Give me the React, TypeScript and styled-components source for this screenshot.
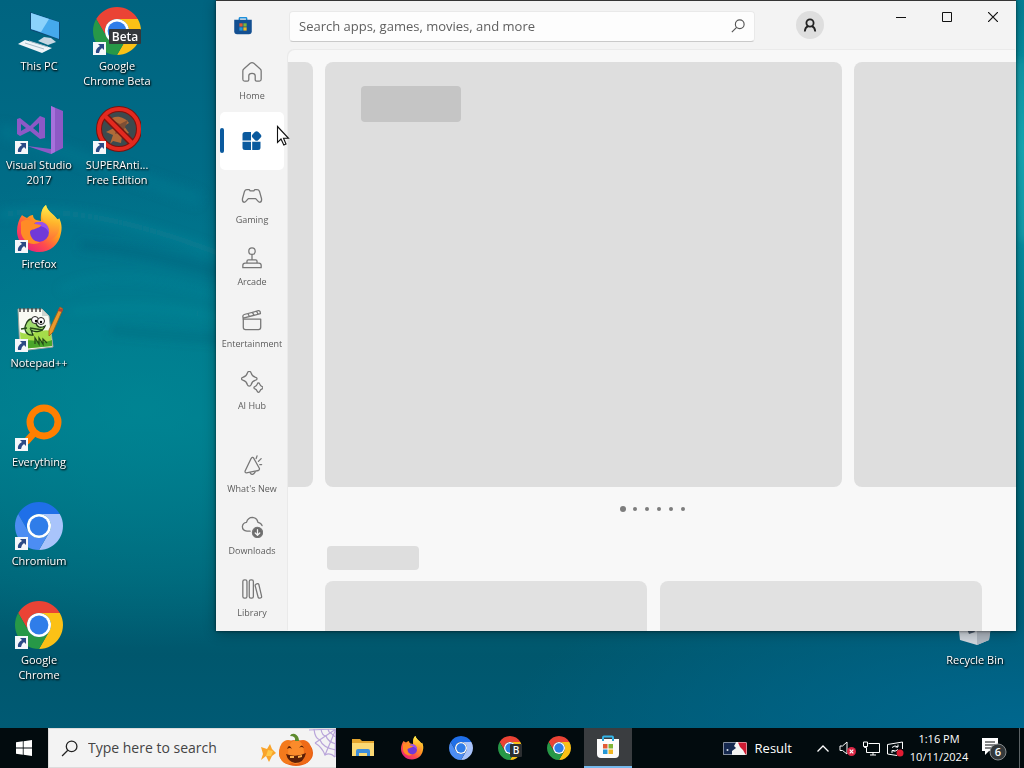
import React from 'react';
import styled, { createGlobalStyle } from 'styled-components';

const GlobalStyle = createGlobalStyle`
  * { box-sizing: border-box; }
  body {
    margin: 0;
    font-family: "Open Sans", "Noto Sans", sans-serif;
    font-size: 12px;
    color: #1b1b1b;
  }
  button { font: inherit; color: inherit; border: 0; padding: 0; background: none; }
  svg { display: block; flex: none; }
`;

/* ---------- Shell ---------- */

const Screen = styled.div`
  display: flex;
  flex-direction: column;
  height: 100vh;
  overflow: hidden;
`;

const Desktop = styled.main`
  position: relative;
  flex: 1;
  min-height: 0;
  overflow: hidden;
  background:
    radial-gradient(ellipse 300px 260px at 100% 20%, #0aa3b0 0%, rgba(10, 163, 176, 0) 100%),
    radial-gradient(ellipse 340px 240px at 14% 56%, rgba(0, 138, 150, 0.65) 0%, rgba(0, 138, 150, 0) 100%),
    radial-gradient(ellipse 520px 180px at 100% 100%, #00678e 0%, rgba(0, 103, 142, 0) 100%),
    linear-gradient(180deg, #006480 0%, #00708a 35%, #00788b 58%, #006478 80%, #00576d 90%, #005a74 100%);
`;

const Waves = styled.svg`
  position: absolute;
  inset: 0;
  width: 100%;
  height: 100%;
`;

const IconGrid = styled.div`
  position: relative;
  display: grid;
  grid-template-columns: 78px 78px 1fr 78px;
  grid-template-rows: repeat(7, 99px);
  padding-right: 10px;
`;

const Shortcut = styled.button<{ $col: number; $row: number }>`
  grid-column: ${(p) => p.$col};
  grid-row: ${(p) => p.$row};
  display: flex;
  flex-direction: column;
  align-items: center;
  gap: 3px;
  padding-top: 7px;
`;

const ShortcutArt = styled.span`
  position: relative;
  width: 48px;
  height: 48px;
`;

const ShortcutArrow = styled.svg`
  position: absolute;
  left: 0;
  bottom: 0;
`;

const ShortcutLabel = styled.span`
  font-size: 11px;
  line-height: 15px;
  color: #fff;
  white-space: pre;
  text-align: center;
  text-shadow: 1px 1px 2px #000, 0 1px 2px rgba(0, 0, 0, 0.7);
`;

/* ---------- Store window ---------- */

const StoreWindow = styled.section`
  position: absolute;
  inset: 0 8px 97px 216px;
  display: flex;
  flex-direction: column;
  overflow: hidden;
  background: #f3f3f3;
  border-top: 1px solid #353535;
  box-shadow: 0 0 3px rgba(0, 0, 0, 0.6), 0 2px 12px rgba(0, 0, 0, 0.3);
`;

const TitleBar = styled.header`
  display: flex;
  align-items: flex-start;
  height: 49px;
  flex: none;
`;

const LogoSlot = styled.div`
  width: 73px;
  padding: 15px 0 0 18px;
`;

const SearchBox = styled.label`
  display: flex;
  align-items: center;
  flex: 1;
  max-width: 466px;
  height: 31px;
  margin-top: 10px;
  padding: 0 9px 1px;
  background: #fdfdfd;
  border: 1px solid #e9e9e9;
  border-bottom-color: #c9c9c9;
  border-radius: 4px;
`;

const SearchInput = styled.input`
  flex: 1;
  min-width: 0;
  padding: 0;
  border: 0;
  outline: 0;
  background: none;
  font: 13px/18px "Open Sans", "Noto Sans", sans-serif;
  &::placeholder { color: #606060; opacity: 1; }
`;

const Avatar = styled.button`
  display: flex;
  align-items: center;
  justify-content: center;
  width: 28px;
  height: 28px;
  margin: 10px 0 0 41px;
  border-radius: 50%;
  background: #dedede;
`;

const Caption = styled.div`
  display: flex;
  margin-left: auto;
`;

const CaptionButton = styled.button`
  display: flex;
  align-items: center;
  justify-content: center;
  width: 46px;
  height: 32px;
`;

const Body = styled.div`
  display: flex;
  flex: 1;
  min-height: 0;
`;

const Sidebar = styled.nav`
  display: flex;
  flex-direction: column;
  justify-content: space-between;
  width: 72px;
  padding: 0 4px 6px;
`;

const NavGroup = styled.div`
  display: flex;
  flex-direction: column;
  gap: 4px;
`;

const NavItem = styled.button<{ $active?: boolean }>`
  position: relative;
  display: flex;
  flex-direction: column;
  align-items: center;
  justify-content: ${(p) => (p.$active ? 'center' : 'flex-start')};
  height: 58px;
  padding-top: ${(p) => (p.$active ? 0 : 11)}px;
  border-radius: 5px;
  background: ${(p) => (p.$active ? '#fff' : 'none')};
  color: ${(p) => (p.$active ? '#0b5a9e' : '#777')};
  &::before {
    content: '';
    display: ${(p) => (p.$active ? 'block' : 'none')};
    position: absolute;
    left: 0;
    top: 16px;
    width: 4px;
    height: 25px;
    border-radius: 2px;
    background: #0b5a9e;
  }
`;

const NavLabel = styled.span`
  margin-top: 6px;
  font-size: 9px;
  line-height: 14px;
  color: #5c5c5c;
  white-space: nowrap;
`;

const Content = styled.div`
  flex: 1;
  min-width: 0;
  overflow: hidden;
  background: #f8f8f8;
  border-top-left-radius: 7px;
  box-shadow: -1px -1px 0 #eaeaea;
`;

const Carousel = styled.div`
  display: grid;
  grid-template-columns: 25px 1fr 162px;
  gap: 12px;
  height: 425px;
  margin-top: 12px;
`;

const Slide = styled.div<{ $edge?: 'left' | 'right' }>`
  padding: ${(p) => (p.$edge ? '0' : '24px 36px')};
  background: #dedede;
  border-radius: ${(p) => (p.$edge === 'left' ? '0 8px 8px 0' : p.$edge === 'right' ? '8px 0 0 8px' : '8px')};
`;

const SlideTitle = styled.div`
  width: 100px;
  height: 36px;
  border-radius: 4px;
  background: #c5c5c5;
`;

const Pager = styled.div`
  display: flex;
  align-items: center;
  justify-content: center;
  gap: 2px;
  height: 44px;
  padding-left: 2px;
`;

const PagerDot = styled.button<{ $current: boolean }>`
  display: flex;
  align-items: center;
  justify-content: center;
  width: 10px;
  height: 10px;
  &::before {
    content: '';
    width: ${(p) => (p.$current ? 6 : 4)}px;
    height: ${(p) => (p.$current ? 6 : 4)}px;
    border-radius: 50%;
    background: #7d7d7d;
  }
`;

const SectionTitle = styled.div`
  width: 92px;
  height: 24px;
  margin: 15px 0 11px 39px;
  border-radius: 4px;
  background: #dedede;
`;

const CardRow = styled.div`
  display: grid;
  grid-template-columns: 1fr 1fr;
  gap: 13px;
  margin: 0 34px 0 37px;
`;

const Card = styled.div`
  height: 180px;
  border-radius: 8px;
  background: #e1e1e1;
`;

const Pointer = styled.svg`
  position: absolute;
  left: 60px;
  top: 124px;
`;

/* ---------- Taskbar ---------- */

const Taskbar = styled.footer`
  display: flex;
  align-items: stretch;
  flex: none;
  height: 40px;
  background: #020b0e;
  color: #fff;
`;

const StartButton = styled.button`
  display: flex;
  align-items: center;
  justify-content: center;
  width: 48px;
`;

const TaskSearch = styled.label`
  display: flex;
  align-items: center;
  width: 288px;
  padding-left: 12px;
  background: #f3f3f3;
  border: 1px solid #dcdcdc;
  border-right: 0;
`;

const TaskSearchInput = styled.input`
  flex: 1;
  min-width: 0;
  margin-left: 10px;
  padding: 0;
  border: 0;
  outline: 0;
  background: none;
  font: 14px/20px "Open Sans", "Noto Sans", sans-serif;
  &::placeholder { color: #444; opacity: 1; }
`;

const TaskApps = styled.div`
  display: flex;
  gap: 1px;
  margin-left: 3px;
`;

const TaskButton = styled.button<{ $active?: boolean }>`
  display: flex;
  align-items: center;
  justify-content: center;
  width: 48px;
  background: ${(p) => (p.$active ? '#3a3d40' : 'none')};
  border-bottom: ${(p) => (p.$active ? '2px solid #76b9ed' : '0')};
`;

const Tray = styled.div`
  display: flex;
  align-items: center;
  margin-left: auto;
`;

const NewsButton = styled.button`
  display: flex;
  align-items: center;
  gap: 8px;
  margin-right: 19px;
  font-size: 13px;
  line-height: 18px;
`;

const TrayButton = styled.button`
  display: flex;
  align-items: center;
  justify-content: center;
  width: 24px;
  height: 40px;
`;

const Clock = styled.button`
  width: 64px;
  font-size: 11px;
  line-height: 18px;
  white-space: nowrap;
  text-align: center;
`;

const Notifications = styled.button`
  display: flex;
  margin: 2px 12px 0 11px;
`;

const ShowDesktop = styled.button`
  width: 5px;
  height: 40px;
  border-left: 1px solid #5b6265;
`;

/* ---------- Drawings ---------- */

const CHROME = ['#ea4335', '#fbc116', '#279847', '#2f7de9'];
const CHROMIUM = ['#1f6fe8', '#a9c4fb', '#4c8df3', '#2f7de9'];

const ChromeMark = ({ size = 48, colors = CHROME }: { size?: number; colors?: string[] }) => (
  <svg width={size} height={size} viewBox="0 0 48 48">
    <path fill={colors[0]} d="M3.22 12A24 24 0 0 1 44.78 12L24 12A12 12 0 0 0 13.61 30Z" />
    <path fill={colors[1]} d="M44.78 12A24 24 0 0 1 24 48L34.39 30A12 12 0 0 0 24 12Z" />
    <path fill={colors[2]} d="M24 48A24 24 0 0 1 3.22 12L13.61 30A12 12 0 0 0 34.39 30Z" />
    <circle cx="24" cy="24" r="12" fill="#fff" />
    <circle cx="24" cy="24" r="9.4" fill={colors[3]} />
  </svg>
);

const ChromeBetaMark = () => (
  <svg width="48" height="48" viewBox="0 0 48 48">
    <path fill="#ea4335" d="M3.22 12A24 24 0 0 1 44.78 12L24 12A12 12 0 0 0 13.61 30Z" />
    <path fill="#fbc116" d="M44.78 12A24 24 0 0 1 24 48L34.39 30A12 12 0 0 0 24 12Z" />
    <path fill="#279847" d="M24 48A24 24 0 0 1 3.22 12L13.61 30A12 12 0 0 0 34.39 30Z" />
    <circle cx="24" cy="24" r="12" fill="#fff" />
    <circle cx="24" cy="24" r="9.4" fill="#2f7de9" />
    <rect x="16" y="22" width="32" height="15" rx="1" fill="#33373a" />
    <text x="32" y="34" textAnchor="middle" fontSize="12" fontWeight="600" fill="#fff" fontFamily="Open Sans, sans-serif">Beta</text>
  </svg>
);

const FirefoxMark = ({ size = 48 }: { size?: number }) => (
  <svg width={size} height={size} viewBox="0 0 48 48">
    <defs>
      <linearGradient id="fxBody" x1="0.85" y1="0.1" x2="0.2" y2="0.95">
        <stop offset="0" stopColor="#ffe03a" />
        <stop offset="0.4" stopColor="#ff9a1f" />
        <stop offset="0.7" stopColor="#ff4a4e" />
        <stop offset="1" stopColor="#e6237c" />
      </linearGradient>
      <linearGradient id="fxFlame" x1="0.6" y1="0" x2="0.5" y2="1">
        <stop offset="0" stopColor="#fff44f" />
        <stop offset="0.5" stopColor="#ffb52c" />
        <stop offset="1" stopColor="#ff7139" />
      </linearGradient>
    </defs>
    <path fill="url(#fxBody)" d="M7 10C8 11 10 12 12 13C14 11 16 10 18 10C18 12 19 14 21 15L26 16C25 8 28 2 31 0C32 6 38 9 42 14C43 15 44 14 44 13C47 18 47 24 46 28C44 40 35 47 24 47C11 47 2 37 2 26C2 20 4 14 7 10Z" />
    <circle cx="24" cy="27" r="10" fill="#7139d8" />
    <path fill="#9a52ec" d="M20 18C28 14 35 20 34 28C32 23 27 20 20 22Z" />
    <path fill="#ff8b26" d="M6 17C12 13 18 16 20 19L26 20C26 22 22 23 20 24C18 25 16 24 15 27C15 32 19 37 25 37C18 42 8 37 6 28Z" />
    <path fill="url(#fxFlame)" d="M31 0C25 4 26 12 29 16C35 20 37 28 33 35C42 34 47 25 44 13C44 15 43 15 42 14C39 9 32 6 31 0Z" />
  </svg>
);

const ThisPcMark = () => (
  <svg width="48" height="48" viewBox="0 0 48 48">
    <path d="M15 5L45 15V33L15 23Z" fill="#0c4a75" />
    <path d="M16 6L44 15V32L16 22Z" fill="#45a9ec" />
    <path d="M16 6L34 12L26 25L16 22Z" fill="#8bd2fb" />
    <path d="M29 30L36 31L41 35L33 38L23 34Z" fill="#c6d7e2" />
    <path d="M10 33L37 41L27 46L3 37Z" fill="#eef4f8" />
    <path d="M10 36L29 42M14 34L33 40" stroke="#a9bdc9" strokeWidth="1" />
  </svg>
);

const VisualStudioMark = () => (
  <svg width="48" height="48" viewBox="0 0 48 48">
    <path fill="#8d59c6" d="M36 0L48 5V42L36 48L12 40L36 43Z" />
    <path fill="#a571dc" d="M36 0L40 2V46L36 48Z" />
    <path fill="#8d59c6" fillRule="evenodd" d="M2 13L5 12L15 20L25 10L30 12V32L25 33L15 25L5 30L2 28ZM6 18V25L11 22ZM24 17L18 22L24 27Z" />
  </svg>
);

const AntiSpywareMark = () => (
  <svg width="48" height="48" viewBox="0 0 48 48">
    <circle cx="26" cy="23" r="20" fill="#3c4a4e" />
    <path d="M15 16C20 8 31 10 36 17L31 20L36 27L29 30L28 37L20 35L17 38L20 29L13 26L21 22Z" fill="#b06a38" />
    <path d="M17 13L27 18L35 14L30 26L22 28L24 20Z" fill="#7d4f35" />
    <circle cx="26" cy="23" r="20" fill="none" stroke="#7a120e" strokeWidth="6" />
    <path d="M12 10L40 38" stroke="#7a120e" strokeWidth="7" />
    <circle cx="26" cy="23" r="20" fill="none" stroke="#e3291f" strokeWidth="4" />
    <path d="M12 10L40 38" stroke="#e3291f" strokeWidth="4" />
  </svg>
);

const NotepadMark = () => (
  <svg width="48" height="48" viewBox="0 0 48 48">
    <path d="M3 5H27L34 12L38 43L5 47Z" fill="#f8faf3" stroke="#9aa39c" strokeWidth="1" />
    <path d="M27 5V12H34Z" fill="#cdd6d0" />
    <path d="M5 28C15 33 25 24 36 27L37 42L6 45Z" fill="#a5dc4a" />
    <path d="M6 38C16 33 27 41 37 36V42L6 45Z" fill="#4aa52a" />
    <path d="M5 4V8M9 4V8M13 4V8M17 4V8M21 4V8M25 4V8" stroke="#444" strokeWidth="1.5" />
    <path d="M11 20C14 13 20 14 21 19C22 24 26 24 30 22C28 28 20 29 16 26L18 31C12 32 8 26 11 20Z" fill="#9fdc6c" stroke="#1f3d17" strokeWidth="1.3" />
    <circle cx="20" cy="16" r="3.500" fill="#fff" stroke="#222" />
    <circle cx="26" cy="17" r="3.500" fill="#fff" stroke="#222" />
    <circle cx="21" cy="17" r="1.2" />
    <circle cx="26" cy="18" r="1.2" />
    <path d="M6 25L12 24M15 24L28 26M20 40V34L24 40V34L28 40V35L32 39" stroke="#244b18" strokeWidth="1.3" fill="none" />
    <path d="M45 3L48 5L38 28L34 32V26Z" fill="#e9992c" stroke="#94601b" strokeWidth="0.8" />
    <path d="M44 4L48 5L47 8L43 7Z" fill="#b04436" />
  </svg>
);

const EverythingMark = () => (
  <svg width="48" height="48" viewBox="0 0 48 48">
    <circle cx="29" cy="19" r="14" fill="none" stroke="#ff7f00" strokeWidth="7" />
    <path d="M20 29L11 39" stroke="#ff7f00" strokeWidth="7" />
  </svg>
);

const RecycleBinMark = () => (
  <svg width="48" height="48" viewBox="0 0 48 48">
    <path d="M5 4L24 0L43 4L38 39L26 44L9 39Z" fill="#cfd5dc" />
    <path d="M26 8L43 4L38 39L26 44Z" fill="#aeb6c0" />
    <path d="M16 28L22 27L24 31L18 33Z" fill="#4d5d70" />
  </svg>
);

const ExplorerMark = () => (
  <svg width="22" height="20" viewBox="0 0 22 20">
    <path d="M0 1H8L10 3H22V18H0Z" fill="#e3a52f" />
    <path d="M0 5H22V18H0Z" fill="#fbd974" />
    <path d="M4 18V13Q4 11 6 11H16Q18 11 18 13V18H15V15H7V18Z" fill="#3e8edb" />
    <rect x="7" y="15" width="8" height="2" fill="#fbd974" />
  </svg>
);

const StoreMark = ({ dark }: { dark?: boolean }) => (
  <svg width={dark ? 18 : 24} height={dark ? 19 : 26} viewBox="0 0 24 26">
    <path d="M7 7V3.5Q7 2.5 8 2.5H16Q17 2.5 17 3.5V7" fill="none" stroke={dark ? '#1d8fdb' : '#35b5e8'} strokeWidth="2" />
    <path d={dark ? 'M0 5H24V21Q24 25 20 25H4Q0 25 0 21Z' : 'M1 5H23V20Q23 24 19 24H5Q1 24 1 20Z'} fill={dark ? '#134f91' : '#fbfbfb'} />
    {!dark && <path d="M7 5V7M17 5V7" stroke="#2b9fd0" strokeWidth="2" />}
    <path d="M7 10H11.5V14.5H7Z" fill="#e25a35" />
    <path d="M12.5 10H17V14.5H12.5Z" fill="#7fb536" />
    <path d="M7 15.5H11.5V20H7Z" fill="#2497d6" />
    <path d="M12.5 15.5H17V20H12.5Z" fill="#f2b622" />
  </svg>
);

const PumpkinArt = () => (
  <svg width="76" height="38" viewBox="0 0 76 38">
    <g fill="none" stroke="#b9a5da" strokeWidth="1.2">
      <path d="M76 0L49 1M76 0L55 14M76 0L65 26M76 0L75 28" />
      <path d="M68 0Q69 4 71 4Q73 7 76 8M61 0Q62 7 66 7Q68 13 76 15M54 0Q55 10 60 11Q63 19 76 21M55 14Q62 18 65 26Q70 23 75 28" />
    </g>
    <path d="M1 18L7 20L10 15L12 20L16 24L12 27L9 33L6 27L1 31L3 25Z" fill="#f9a42b" />
    <path d="M8 21L13 22L11 27L6 27Z" fill="#ffc94a" />
    <ellipse cx="36" cy="24" rx="17" ry="13" fill="#e55f12" />
    <ellipse cx="28" cy="23" rx="9" ry="12" fill="#f47a1c" />
    <ellipse cx="43" cy="23" rx="9" ry="12" fill="#ef6a17" />
    <ellipse cx="36" cy="23" rx="8" ry="12" fill="#fb8b2b" />
    <path d="M35 12Q36 7 30 7Q31 4 35 5Q39 7 39 12Z" fill="#5e8a2e" />
    <path d="M27 20Q29 14 32 20Q30 18 27 20ZM39 19Q42 14 44 19Q41 17 39 19Z" fill="#5b1f07" />
    <path d="M26 25Q36 29 46 24Q44 34 35 34Q28 33 26 25Z" fill="#5b1f07" />
    <path d="M30 27H34V29H30ZM38 27L42 26V28L38 29Z" fill="#ffb14a" />
  </svg>
);

const Magnifier = ({ size, color, width }: { size: number; color: string; width: number }) => (
  <svg width={size} height={size} viewBox="0 0 16 16" fill="none" stroke={color} strokeWidth={width}>
    <circle cx="10" cy="6" r="5" />
    <path d="M6.4 9.6L1 15" />
  </svg>
);

const glyphs: Record<string, React.ReactNode> = {
  home: <path d="M2 11Q2 9.600 3 8.800L10 2.500Q12 1 14 2.500L21 8.800Q22 9.600 22 11V20Q22 22 20 22H17Q15.500 22 15.500 20.500V16Q15.500 13.500 12 13.500T8.500 16V20.500Q8.500 22 7 22H4Q2 22 2 20Z" />,
  gaming: <path d="M6.500 5H9L10 6.500H14L15 5H17.500Q19.500 5 20.200 7L22.400 15Q22.800 18.500 20.500 18.800Q19.500 18.800 18.500 17.600L16 14.800H8L5.500 17.600Q4.500 18.800 3.500 18.800Q1.200 18.500 1.600 15L3.800 7Q4.500 5 6.500 5Z" />,
  arcade: (
    <>
      <circle cx="12" cy="4.500" r="3.500" />
      <path d="M12 8V14M6.500 17.500V15.500Q6.500 14 8 14H16Q17.500 14 17.500 15.500V17.500M2 22.500V20Q2 17.500 4.500 17.500H19.500Q22 17.500 22 20V22.500Z" />
    </>
  ),
  movies: (
    <>
      <path d="M2.500 11H21.500V20Q21.500 22.500 19 22.500H5Q2.500 22.500 2.500 20Z" />
      <path d="M2.500 11L2 8Q2 6.500 3.500 6L19 1.800Q20.500 1.600 20.900 3L21.200 5L2.500 10M7.500 5L9 8M12.500 3.700L14 6.700M17 2.500L18.500 5.500" />
    </>
  ),
  ai: (
    <>
      <path d="M9 0.500Q10.500 0.500 11 2Q12 6 16 7Q17.500 7.500 17.500 8.500T16 10Q12 11 11 15Q10.500 16.500 9 16.500T7 15Q6 11 2 10Q0.500 9.500 0.500 8.500T2 7Q6 6 7 2Q7.500 0.500 9 0.500Z" />
      <path d="M19 13Q20 13 20.300 14Q21 16.500 23.500 17.200Q24.500 18.500 23.500 19.200Q21 20 20.300 22.500Q19 24 17.900 22.500Q17.200 20 14.700 19.200Q13.500 18.500 14.700 17.200Q17.200 16.500 17.900 14Q18 13 19 13Z" />
    </>
  ),
  news: (
    <>
      <path d="M13.500 4L20 15.500Q20.500 17.500 19 18L6 20.500Q4 20.500 4.500 18.500L11 5Q12.500 3 13.500 4Z" />
      <path d="M10 20.500Q12.500 24.500 15.500 19.500M16.500 5L17.500 2M19 8L22 5M20.500 11.500H22.500" />
    </>
  ),
  downloads: (
    <>
      <path d="M10 16.500H6.500Q1.500 16 1.500 11.500Q2 7.500 6 7Q7.500 1.500 12.500 1.500Q17.500 2 18.500 7Q22 7.500 23 10.500" />
      <circle cx="18" cy="18" r="5.500" fill="#6a6a6a" />
      <path d="M18 15V20.500M15.500 18.500L18 21L20.500 18.500" stroke="#f3f3f3" />
    </>
  ),
  library: (
    <>
      <rect x="2" y="2" width="4.500" height="20" rx="1.800" />
      <rect x="9" y="2" width="4.500" height="20" rx="1.800" />
      <path d="M15.500 8.500Q15.200 7 16.500 6.600L18 6.200Q19 6 19.500 7.200L22.500 20Q22.800 21.300 21.500 21.700L20.300 22Q19 22.200 18.700 21Z" />
    </>
  ),
};

const NavGlyph = ({ name }: { name: string }) => (
  <svg width="22" height="22" viewBox="0 0 24 24" fill="none" stroke="currentColor" strokeWidth="1.400" strokeLinejoin="round" strokeLinecap="round">
    {glyphs[name]}
  </svg>
);

const AppsGlyph = () => (
  <svg width="20" height="20" viewBox="0 0 20 20" fill="currentColor">
    <path d="M3 1H9V9.500H0.500V3.500Q0.500 1 3 1ZM0.500 10.700H9V19H3Q0.500 19 0.500 16.500ZM10.200 10.700H18.500V16.500Q18.500 19 16 19H10.200Z" />
    <rect x="10.600" y="1" width="8" height="8" rx="2.500" transform="rotate(45 14.600 5)" />
  </svg>
);

/* ---------- Data ---------- */

const shortcuts: { label: string; art: React.ReactNode; col: number; row: number; link?: boolean }[] = [
  { label: 'This PC', art: <ThisPcMark />, col: 1, row: 1 },
  { label: 'Visual Studio\n2017', art: <VisualStudioMark />, col: 1, row: 2, link: true },
  { label: 'Firefox', art: <FirefoxMark />, col: 1, row: 3, link: true },
  { label: 'Notepad++', art: <NotepadMark />, col: 1, row: 4, link: true },
  { label: 'Everything', art: <EverythingMark />, col: 1, row: 5, link: true },
  { label: 'Chromium', art: <ChromeMark colors={CHROMIUM} />, col: 1, row: 6, link: true },
  { label: 'Google\nChrome', art: <ChromeMark />, col: 1, row: 7, link: true },
  { label: 'Google\nChrome Beta', art: <ChromeBetaMark />, col: 2, row: 1, link: true },
  { label: 'SUPERAnti...\nFree Edition', art: <AntiSpywareMark />, col: 2, row: 2, link: true },
  { label: 'Recycle Bin', art: <RecycleBinMark />, col: 4, row: 7 },
];

const lowerNav = [
  ['news', "What's New"],
  ['downloads', 'Downloads'],
  ['library', 'Library'],
];

const NavEntry = ({ icon, label }: { icon: string; label: string }) => (
  <NavItem type="button">
    <NavGlyph name={icon} />
    <NavLabel>{label}</NavLabel>
  </NavItem>
);

export default function App() {
  return (
    <Screen>
      <GlobalStyle />
      <Desktop>
        <Waves viewBox="0 0 1024 728" preserveAspectRatio="none" aria-hidden="true">
          <defs>
            <filter id="soft" x="-20%" y="-50%" width="140%" height="200%"><feGaussianBlur stdDeviation="5" /></filter>
          </defs>
          <g filter="url(#soft)" fill="none">
            <path d="M0 215Q90 200 240 262" stroke="#178ea0" strokeWidth="7" opacity="0.4" />
            <path d="M60 290Q120 260 230 300" stroke="#1b93a3" strokeWidth="5" opacity="0.25" />
            <path d="M70 312Q150 300 240 322" stroke="#23a0ac" strokeWidth="6" opacity="0.25" />
            <path d="M80 245Q150 250 240 280" stroke="#00566f" strokeWidth="10" opacity="0.3" />
            <path d="M110 330Q160 335 230 340" stroke="#005d74" strokeWidth="8" opacity="0.3" />
            <path d="M0 130Q60 150 200 200" stroke="#0c7d94" strokeWidth="14" opacity="0.4" />
            <path d="M1018 60L1024 240" stroke="#3dc5cb" strokeWidth="6" opacity="0.5" />
          </g>
        </Waves>

        <IconGrid>
          {shortcuts.map((s) => (
            <Shortcut key={s.label} type="button" $col={s.col} $row={s.row}>
              <ShortcutArt>
                {s.art}
                {s.link && (
                  <ShortcutArrow width="13" height="13" viewBox="0 0 13 13">
                    <rect width="13" height="13" fill="#f5f7fa" />
                    <path d="M5 2H11V8L9 6Q6 8 6 11H3Q2 7 7 4Z" fill="#2c4a86" />
                  </ShortcutArrow>
                )}
              </ShortcutArt>
              <ShortcutLabel>{s.label}</ShortcutLabel>
            </Shortcut>
          ))}
        </IconGrid>

        <StoreWindow aria-label="Microsoft Store">
          <TitleBar>
            <LogoSlot><StoreMark dark /></LogoSlot>
            <SearchBox>
              <SearchInput type="search" placeholder="Search apps, games, movies, and more" aria-label="Search the store" />
              <Magnifier size={14} color="#555" width={1.3} />
            </SearchBox>
            <Avatar type="button" aria-label="Account">
              <svg width="14" height="14" viewBox="0 0 14 14" fill="none" stroke="#222" strokeWidth="1.8">
                <circle cx="7" cy="5" r="3.600" />
                <path d="M1.800 13.500Q2 9.500 5 8.200M12.200 13.500Q12 9.500 9 8.200" />
              </svg>
            </Avatar>
            <Caption>
              <CaptionButton type="button" aria-label="Minimize">
                <svg width="10" height="10" viewBox="0 0 10 10" stroke="#111"><path d="M0 5.500H10" /></svg>
              </CaptionButton>
              <CaptionButton type="button" aria-label="Maximize">
                <svg width="10" height="10" viewBox="0 0 10 10" stroke="#111" fill="none"><path d="M0.500 0.500H9.500V9.500H0.500Z" /></svg>
              </CaptionButton>
              <CaptionButton type="button" aria-label="Close">
                <svg width="10" height="10" viewBox="0 0 10 10" stroke="#111" strokeWidth="1.200"><path d="M0 0L10 10M10 0L0 10" /></svg>
              </CaptionButton>
            </Caption>
          </TitleBar>

          <Body>
            <Sidebar>
              <NavGroup>
                <NavEntry icon="home" label="Home" />
                <NavItem type="button" $active aria-label="Apps"><AppsGlyph /></NavItem>
                <NavEntry icon="gaming" label="Gaming" />
                <NavEntry icon="arcade" label="Arcade" />
                <NavEntry icon="movies" label="Entertainment" />
                <NavEntry icon="ai" label="AI Hub" />
              </NavGroup>
              <NavGroup>
                {lowerNav.map(([icon, label]) => <NavEntry key={icon} icon={icon} label={label} />)}
              </NavGroup>
            </Sidebar>

            <Content>
              <Carousel>
                <Slide $edge="left" />
                <Slide><SlideTitle /></Slide>
                <Slide $edge="right" />
              </Carousel>
              <Pager>
                {[0, 1, 2, 3, 4, 5].map((n) => (
                  <PagerDot key={n} type="button" $current={n === 0} aria-label={`Slide ${n + 1}`} />
                ))}
              </Pager>
              <SectionTitle />
              <CardRow>
                <Card />
                <Card />
              </CardRow>
            </Content>
          </Body>

          <Pointer width="14" height="22" viewBox="0 0 14 22">
            <path d="M1.500 1.500V17.500L5 14L7.800 20L10 19L7.500 13.300H12.500Z" fill="#fff" stroke="#111" strokeWidth="1.100" />
          </Pointer>
        </StoreWindow>
      </Desktop>

      <Taskbar>
        <StartButton type="button" aria-label="Start">
          <svg width="16" height="16" viewBox="0 0 16 16" fill="#fff">
            <path d="M0 2.300L6.800 1.300V7.600H0ZM7.600 1.200L16 0V7.600H7.600ZM0 8.400H6.800V14.700L0 13.700ZM7.600 8.400H16V16L7.600 14.800Z" />
          </svg>
        </StartButton>
        <TaskSearch>
          <Magnifier size={17} color="#222" width={1.2} />
          <TaskSearchInput type="search" placeholder="Type here to search" aria-label="Search Windows" />
          <PumpkinArt />
        </TaskSearch>
        <TaskApps>
          <TaskButton type="button" aria-label="File Explorer"><ExplorerMark /></TaskButton>
          <TaskButton type="button" aria-label="Firefox"><FirefoxMark size={24} /></TaskButton>
          <TaskButton type="button" aria-label="Chromium"><ChromeMark size={24} colors={CHROMIUM} /></TaskButton>
          <TaskButton type="button" aria-label="Google Chrome Beta">
            <svg width="24" height="24" viewBox="0 0 24 24">
              <ChromeMark size={24} />
              <rect x="12" y="8" width="12" height="13" rx="1" fill="#2c2f31" />
              <text x="18" y="18" textAnchor="middle" fontSize="10" fontWeight="600" fill="#fff" fontFamily="Open Sans, sans-serif">B</text>
            </svg>
          </TaskButton>
          <TaskButton type="button" aria-label="Google Chrome"><ChromeMark size={24} /></TaskButton>
          <TaskButton type="button" $active aria-label="Microsoft Store"><StoreMark /></TaskButton>
        </TaskApps>

        <Tray>
          <NewsButton type="button">
            <svg width="24" height="13" viewBox="0 0 24 13">
              <rect width="24" height="13" rx="1.500" fill="#f4f4f4" />
              <path d="M1.500 0.500H13L11 4L13 6L9 9V12.500H1.500Q0.500 12.500 0.500 11.500V1.500Q0.500 0.500 1.500 0.500Z" fill="#16294f" />
              <path d="M15 0.500H22.500Q23.500 0.500 23.500 1.500V11.500Q23.500 12.500 22.500 12.500L20 8L17 5Z" fill="#cf1c33" />
              <circle cx="4.500" cy="8" r="1" fill="#dfe5ee" />
            </svg>
            Result
          </NewsButton>
          <TrayButton type="button" aria-label="Show hidden icons">
            <svg width="12" height="7" viewBox="0 0 12 7" fill="none" stroke="#fff" strokeWidth="1.300"><path d="M0.500 6.500L6 1L11.500 6.500" /></svg>
          </TrayButton>
          <TrayButton type="button" aria-label="Volume muted">
            <svg width="17" height="15" viewBox="0 0 17 15" fill="none">
              <path d="M1 5H3.500L8 1V13L3.500 9.500H1Z" stroke="#fff" />
              <circle cx="12.500" cy="10.500" r="4.500" fill="#d92644" />
              <path d="M10.700 8.700L14.300 12.300M14.300 8.700L10.700 12.300" stroke="#fff" strokeWidth="1.200" />
            </svg>
          </TrayButton>
          <TrayButton type="button" aria-label="Network">
            <svg width="17" height="15" viewBox="0 0 17 15" fill="none" stroke="#fff">
              <path d="M5.500 2.500H16.500V11.500H3.500V6.500M7 14H13M10 11.500V14M0.500 1H4.500V5.500H0.500ZM1.500 5.500V6.500H3.500" />
            </svg>
          </TrayButton>
          <TrayButton type="button" aria-label="Update status">
            <svg width="17" height="17" viewBox="0 0 17 17" fill="none" stroke="#fff">
              <path d="M10 15.500L0.500 14V4.500L15.500 2V9" />
              <path d="M5 7.500Q8 4.500 11 7M11 4.500V7H8.500M11 9.500Q8 12.500 5 10.500M5 13V10.500H7.500" />
              <circle cx="13" cy="13" r="3.500" fill="#e21c33" stroke="none" />
            </svg>
          </TrayButton>
          <Clock type="button">1:16 PM<br />10/11/2024</Clock>
          <Notifications type="button" aria-label="6 notifications">
            <svg width="25" height="24" viewBox="0 0 25 24">
              <path d="M0 1H16V14H7L3 18V14H0Z" fill="#fff" />
              <path d="M3 5H13M3 8H13M3 11H10" stroke="#0a0f11" strokeWidth="1.200" />
              <circle cx="16" cy="15" r="8" fill="#33383a" stroke="#85898b" />
              <text x="16" y="19" textAnchor="middle" fontSize="11" fontWeight="600" fill="#fff" fontFamily="Open Sans, sans-serif">6</text>
            </svg>
          </Notifications>
          <ShowDesktop type="button" aria-label="Show desktop" />
        </Tray>
      </Taskbar>
    </Screen>
  );
}
